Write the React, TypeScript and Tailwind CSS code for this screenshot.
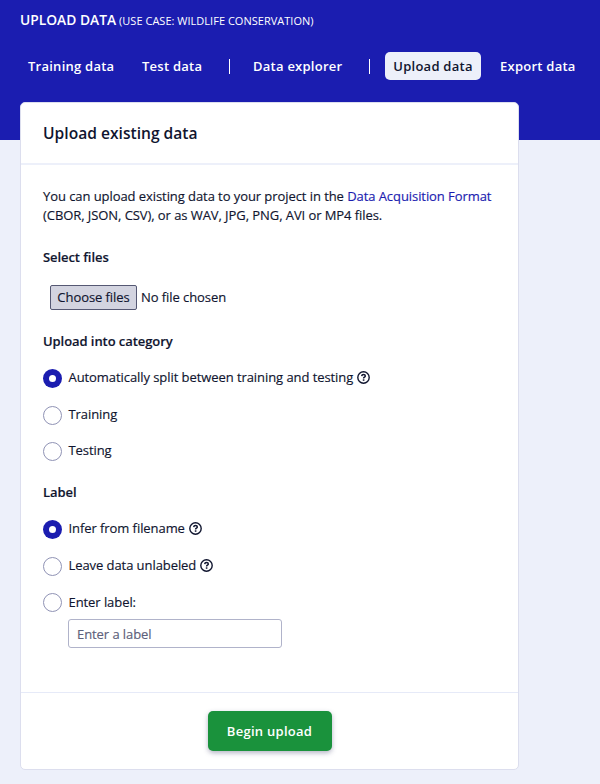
import React from 'react';

function HelpIcon() {
  return (
    <svg className="ml-[4px] h-[13px] w-[13px] shrink-0" viewBox="0 0 13 13" fill="none" stroke="currentColor" strokeWidth="1.4">
      <circle cx="6.5" cy="6.5" r="5.7" />
      <path d="M4.7 5.1c.1-1 .8-1.5 1.8-1.5s1.8.6 1.8 1.4c0 1.2-1.7 1.2-1.7 2.4" strokeWidth="1.5" />
      <path d="M6.6 8.3v1.5" strokeWidth="1.6" />
    </svg>
  );
}

function RadioRow({ label, checked = false, help = false }: { label: string; checked?: boolean; help?: boolean }) {
  return (
    <label className="flex h-[36.7px] items-center">
      <span
        className={
          checked
            ? 'mt-px -ml-[0.5px] flex h-[19px] w-[19px] items-center justify-center rounded-full bg-[#1b1db0]'
            : 'mt-px -ml-[0.5px] h-[19px] w-[19px] rounded-full border border-[#9093b5] bg-white'
        }
      >
        {checked && <span className="h-[7px] w-[7px] rounded-full bg-white" />}
      </span>
      <span className="ml-[7px] whitespace-nowrap">{label}</span>
      {help && <HelpIcon />}
    </label>
  );
}

export default function App() {
  return (
    <div className="h-[784px] w-[600px] overflow-hidden bg-[#edf0fa] font-['Open_Sans','Noto_Sans',sans-serif] text-[13px] font-medium tracking-[-0.07px] text-[#10152f] [-webkit-text-stroke:0.15px]">
      <header className="h-[140px] bg-[#1b1db0] text-white [-webkit-text-stroke:0px]">
        <div className="flex h-[40px] items-center pl-5 whitespace-nowrap">
          <h1 className="pt-px text-[13.8px] font-semibold tracking-normal">UPLOAD DATA</h1>
          <span className="ml-[3px] pt-[3px] text-[11px] font-normal tracking-[0.02px]">(USE CASE: WILDLIFE CONSERVATION)</span>
        </div>
        <nav className="mt-3 flex h-[28px] items-center pl-7 text-[13px] font-semibold tracking-[0.25px] whitespace-nowrap">
          <a className="w-[114px] pt-px">Training data</a>
          <a className="w-[87px] pt-px">Test data</a>
          <span className="h-[15px] w-px bg-white" />
          <a className="ml-[23px] w-[116px] pt-px">Data explorer</a>
          <span className="h-[15px] w-px bg-white" />
          <a className="ml-[15px] flex h-[28px] w-[96px] items-center justify-center rounded-[5px] bg-[#edf0fa] pt-px text-[#10152f]">
            Upload data
          </a>
          <a className="ml-[19px] pt-px">Export data</a>
        </nav>
      </header>

      <main className="-mt-[38px] ml-5 h-[668px] w-[499px] rounded-[5px] border border-[#dcdeee] bg-white">
        <div className="flex h-[62px] items-center border-b-2 border-[#edf0fa] pl-[22px]">
          <h2 className="pt-[2px] text-[15.6px] font-semibold tracking-normal [-webkit-text-stroke:0px]">Upload existing data</h2>
        </div>

        <div className="h-[527px] px-[22px] pt-[22px]">
          <p className="leading-[19px] whitespace-nowrap">
            You can upload existing data to your project in the <a className="text-[#1b1db0]">Data Acquisition Format</a>
            <br />
            (CBOR, JSON, CSV), or as WAV, JPG, PNG, AVI or MP4 files.
          </p>

          <h3 className="mt-[23px] flex h-[20px] items-center font-semibold">Select files</h3>
          <div className="mt-[16px] flex h-[26px] items-center pl-[7px] whitespace-nowrap">
            <button className="flex h-[25px] w-[87px] items-center justify-center rounded-[2px] border border-[#555873] bg-[#d3d4e0] pt-px">
              Choose files
            </button>
            <span className="ml-[4px] pt-px">No file chosen</span>
          </div>

          <h3 className="mt-[21px] flex h-[20px] items-center pt-px font-semibold">Upload into category</h3>
          <div className="mt-[8.5px]">
            <RadioRow label="Automatically split between training and testing" checked help />
            <RadioRow label="Training" />
            <RadioRow label="Testing" />
          </div>

          <h3 className="mt-[12.5px] flex h-[20px] items-center pt-px font-semibold">Label</h3>
          <div className="mt-[8.5px]">
            <RadioRow label="Infer from filename" checked help />
            <RadioRow label="Leave data unlabeled" help />
            <RadioRow label="Enter label:" />
          </div>
          <input
            className="-mt-[1.5px] ml-[25px] block h-[29px] w-[214px] rounded-[3px] border border-[#b0b3ca] px-[8px] placeholder:text-[#5d617b] placeholder:opacity-100"
            placeholder="Enter a label"
          />
        </div>

        <footer className="flex h-[77px] justify-center border-t border-[#e6eaf8] pt-[18px]">
          <button className="h-[40px] w-[124px] rounded-[5px] bg-[#1a923c] pt-px font-semibold tracking-[0.27px] text-white shadow-[0_2px_5px_rgba(40,40,90,0.35)] [-webkit-text-stroke:0px]">
            Begin upload
          </button>
        </footer>
      </main>
    </div>
  );
}
